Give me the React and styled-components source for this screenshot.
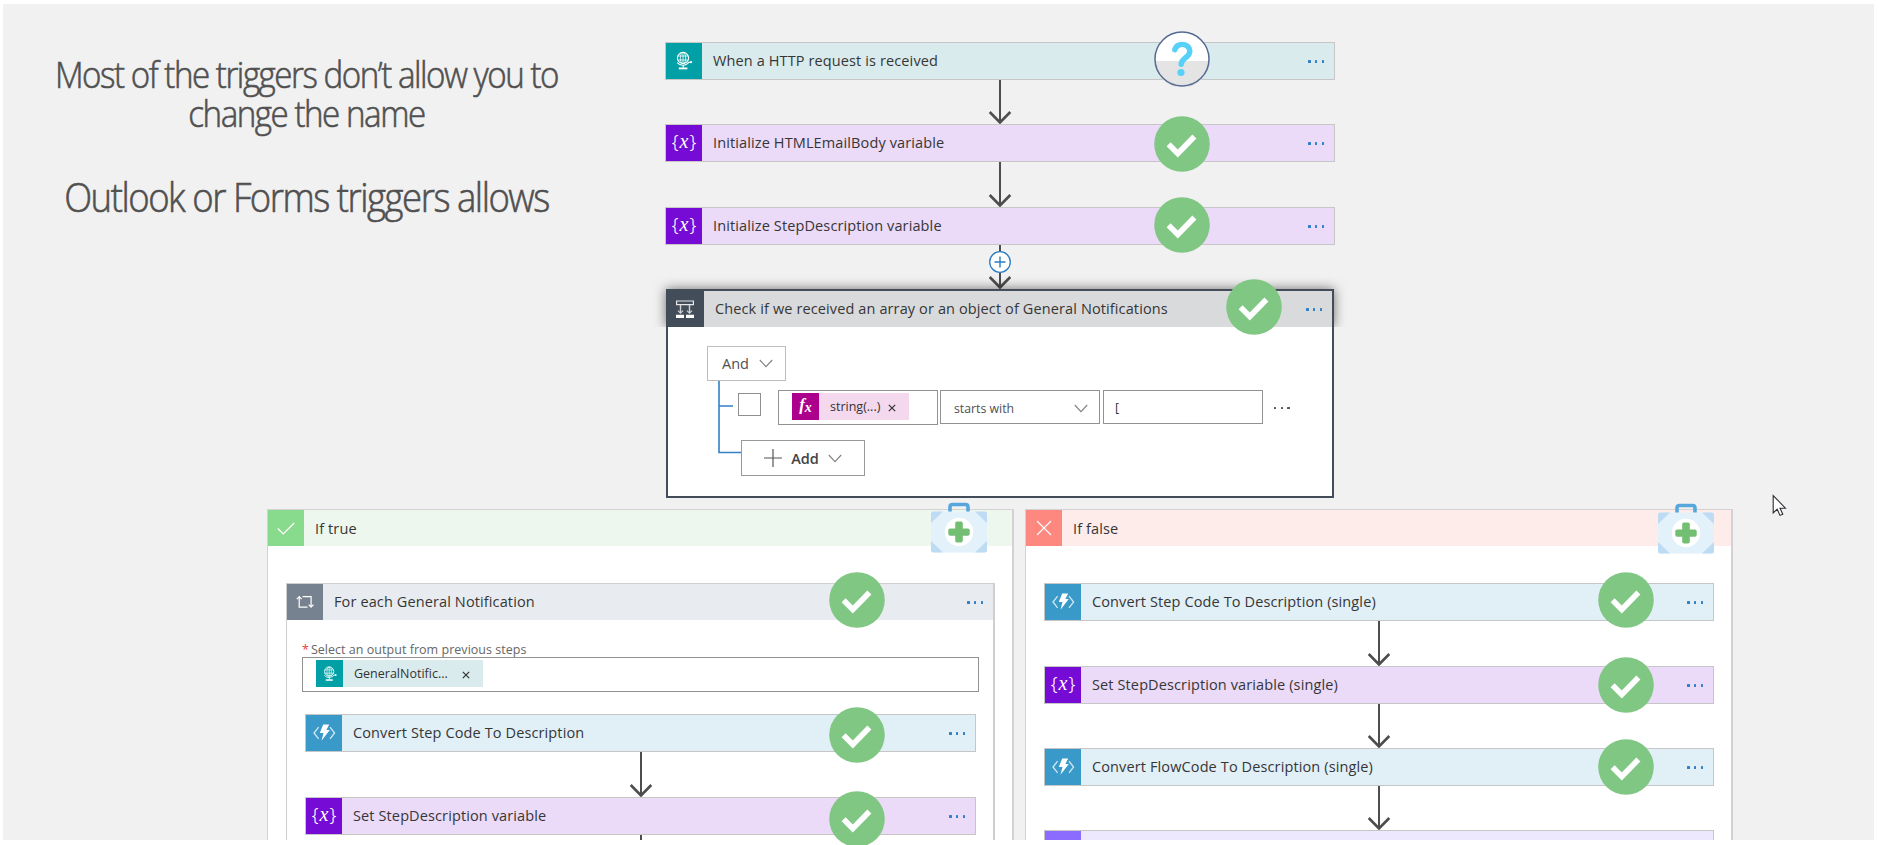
import styled, { createGlobalStyle } from "styled-components";

const GlobalStyle = createGlobalStyle`
  * {
    box-sizing: border-box;
  }
  body {
    margin: 0;
    font-family: "Open Sans", "Noto Sans", sans-serif;
    color: #363636;
  }
`;
const Page = styled.div`
  position: relative;
  width: 1880px;
  height: 845px;
  overflow: hidden;
  background-color: #f1f1f1;
  /* white frame around the canvas, the badges stay above it */
  &::after {
    content: "";
    position: absolute;
    inset: 0;
    border: solid #fff;
    border-width: 4px 6px 5px 3px;
    z-index: 1;
    pointer-events: none;
  }
`;
const TopArea = styled.div`
  display: grid;
  grid-template-columns: 665px 670px 1fr;
  height: 509px;
`;
const Notes = styled.div`
  padding: 55px 52px 0 0;
  text-align: center;
  color: #505050;
  font-weight: 300;
`;
const Note = styled.p`
  margin: 0 0 ${({ $gap }) => $gap || 0}px;
  font-size: ${({ $size }) => $size}px;
  line-height: 39px;
  letter-spacing: -1.6px;
  white-space: nowrap;
  transform: scaleX(0.92);
  -webkit-text-stroke: 0.6px #505050;
`;
const Flow = styled.div`
  display: flex;
  flex-direction: column;
  align-items: stretch;
  padding-top: ${({ $top }) => $top || 0}px;
`;
const Step = styled.div`
  position: relative;
  display: flex;
  align-items: center;
  flex: none;
  height: 38px;
  border: 1px solid #c6c6c6;
  background-color: ${({ $bg }) => $bg};
`;
const Tile = styled.div`
  display: flex;
  align-items: center;
  justify-content: center;
  flex: none;
  align-self: stretch;
  width: ${({ $width }) => $width || 36}px;
  background-color: ${({ $bg }) => $bg};
  color: #fff;
`;
const StepName = styled.span`
  flex: 1;
  padding: 0 0 1px 11px;
  font-size: 14.5px;
  letter-spacing: 0.12px;
  white-space: nowrap;
`;
const BranchName = styled(StepName)`
  padding-bottom: 0;
`;
const Dots = styled.span`
  display: flex;
  flex: none;
  gap: 4.3px;
  margin: 1px ${({ $right }) => $right ?? 10}px 0 ${({ $left }) => $left || 0}px;
  &::before,
  &::after,
  i {
    content: "";
    width: 2.4px;
    height: 2.4px;
    border-radius: 0.5px;
    background-color: ${({ $color }) => $color || "#2f80c8"};
  }
`;
const Badge = styled.div`
  position: absolute;
  z-index: 2;
  left: ${({ $x }) => $x}px;
  top: ${({ $y }) => $y}px;
  svg {
    display: block;
  }
`;
const ArrowBox = styled.div`
  display: flex;
  justify-content: center;
  flex: none;
  height: ${({ $height }) => $height}px;
`;
const ArrowInner = styled.div`
  position: relative;
  width: 24px;
`;
const PlusBadge = styled.div`
  position: absolute;
  left: 0;
  top: 5px;
`;
const Condition = styled.div`
  width: 668px;
  height: 209px;
  margin: 0 1px;
  border: 2px solid #434d59;
  background-color: #fff;
`;
const ConditionHead = styled.div`
  position: relative;
  display: flex;
  align-items: center;
  height: 38px;
  margin: -2px -2px 0;
  border: solid #434d59;
  border-width: 2px 2px 0 0;
  background-color: #d9dadc;
  /* shadow goes round the header only, not over the body */
  &::before {
    content: "";
    position: absolute;
    inset: -2px -2px 0 0;
    box-shadow: 0 0 12px rgba(0, 0, 0, 0.55);
    clip-path: inset(-14px -14px 0 -14px);
  }
`;
const ConditionBody = styled.div`
  padding: 19px 0 0 39px;
`;
const Select = styled.div`
  display: flex;
  align-items: center;
  flex: none;
  width: ${({ $width }) => $width}px;
  height: ${({ $height }) => $height}px;
  padding: ${({ $pad }) => $pad};
  justify-content: space-between;
  border: 1px solid ${({ $border }) => $border || "#999"};
  background-color: #fff;
  font-size: ${({ $size }) => $size || 14.5}px;
  font-weight: ${({ $weight }) => $weight || 400};
  color: ${({ $color }) => $color || "#505050"};
  svg {
    flex: none;
  }
`;
const AddButton = styled(Select)`
  margin-left: 3px;
`;
const Tree = styled.div`
  display: grid;
  grid-template-columns: 11px 1fr;
  height: 95px;
`;
const TreeLines = styled.svg`
  grid-column: 2;
  grid-row: 1;
`;
const TreeItems = styled.div`
  grid-column: 2;
  grid-row: 1;
  padding-left: 20px;
`;
const RuleRow = styled.div`
  display: flex;
  align-items: flex-start;
  padding-top: 9px;
  height: 59px;
`;
const CheckBox = styled.div`
  flex: none;
  width: 23px;
  height: 23px;
  margin: 3px 17px 0 0;
  border: 1px solid #8f8f8f;
`;
const Field = styled.div`
  display: flex;
  align-items: center;
  flex: none;
  width: ${({ $width }) => $width}px;
  height: ${({ $height }) => $height}px;
  padding-left: ${({ $pad }) => $pad}px;
  margin: 0 ${({ $right }) => $right || 0}px 0 ${({ $left }) => $left || 0}px;
  border: 1px solid #929292;
  background-color: #fff;
  font-size: 12.5px;
  color: #333;
`;
const RuleDots = styled.div`
  display: flex;
  align-items: center;
  height: 35px;
`;
const Token = styled.div`
  display: flex;
  align-items: center;
  width: ${({ $width }) => $width}px;
  height: 27px;
  margin-top: -2px;
  background-color: ${({ $bg }) => $bg};
  white-space: nowrap;
  > svg {
    margin-top: 2px;
  }
`;
const TokenText = styled.span`
  width: ${({ $width }) => $width}px;
  padding-left: ${({ $pad }) => $pad}px;
`;
const Branches = styled.div`
  display: flex;
  gap: 11px;
  padding-left: 267px;
`;
const Branch = styled.div`
  flex: none;
  width: ${({ $width }) => $width}px;
  height: 400px;
  border: 1px solid #d2d2d2;
  border-right-width: 2px;
  background-color: #fff;
`;
const BranchHead = styled.div`
  position: relative;
  display: flex;
  align-items: center;
  height: 36px;
  background-color: ${({ $bg }) => $bg};
`;
const BranchBody = styled.div`
  padding: 37px 0 0 18px;
`;
const FalseFlow = styled(Flow)`
  width: 670px;
`;
const Scope = styled.div`
  width: 709px;
  height: 360px;
  border: 1px solid #cfcfcf;
  border-right-width: 2px;
`;
const ScopeBody = styled.div`
  padding: 22px 0 0 15px;
`;
const FieldLabel = styled.div`
  height: 15px;
  line-height: 16px;
  font-size: 12.5px;
  letter-spacing: 0.03px;
  color: #666;
  white-space: nowrap;
  b {
    color: #f04040;
    font-weight: 400;
    margin-right: 2px;
  }
`;
const ScopeFlow = styled(Flow)`
  width: 671px;
  margin-left: 3px;
`;
const VarGlyph = styled.span`
  display: flex;
  align-items: center;
  margin-top: -4px;
  font-family: "Noto Sans", sans-serif;
  font-size: 19px;
  font-weight: 300;
  line-height: 20px;
  i {
    font-family: "Liberation Serif", serif;
    font-size: 20px;
    margin: 0 1px;
  }
`;
const FxGlyph = styled.span`
  font-family: "Liberation Serif", serif;
  font-style: italic;
  font-weight: bold;
  font-size: 17px;
  line-height: 20px;
  sub {
    font-size: 14px;
    vertical-align: -2px;
  }
`;
const Pointer = styled.svg`
  position: absolute;
  left: 1772px;
  top: 494px;
`;

const Globe = ({ size = 22 }) => (
  <svg width={size} height={size} viewBox="0 0 22 22" fill="none" stroke="#fff">
    <circle cx="10" cy="8" r="5.6" strokeWidth="1.1" />
    <path d="M10 2.4v11.2M4.6 6h10.8M4.6 10h10.8" strokeWidth="0.8" />
    <ellipse cx="10" cy="8" rx="2.7" ry="5.6" strokeWidth="0.8" />
    <path d="M4.2 12.6c3 3.6 9 3.4 11.8-.4M10.2 15v3" strokeWidth="1.1" />
    <path d="M5.8 18.4h8.6" strokeWidth="1.8" />
    <path d="M15.5 12.2h2" strokeWidth="1" />
    <circle cx="18" cy="12.2" r="1.1" fill="#fff" stroke="none" />
  </svg>
);
const Bolt = () => (
  <svg width="36" height="36" viewBox="0 0 36 36" fill="none">
    <path d="M12.6 12.2L8 18l4.6 5.8M24 12.2l4.6 5.8-4.6 5.8" stroke="#d3e8f4" strokeWidth="1.3" />
    <path d="M17.2 9.6h6L20.4 15h3.4l-8.3 10.8 2-7.8h-3.7z" fill="#fff" />
  </svg>
);
const Split = () => (
  <svg width="20" height="20" viewBox="0 0 20 20" fill="none">
    <path d="M1.6 2h16.8v3.6H1.6z" stroke="#e6e8ea" strokeWidth="1.2" />
    <path d="M5.5 6v8M14.5 6v8" stroke="#cfd3d8" strokeWidth="1.4" />
    <path d="M3 11.6l2.5 2.6L8 11.6M12 11.6l2.5 2.6 2.5-2.6" stroke="#cfd3d8" strokeWidth="1.2" />
    <path d="M1 15.8h8V19H1zM11 15.8h8V19h-8z" fill="#fff" />
  </svg>
);
const Loop = () => (
  <svg width="20" height="16" viewBox="0 0 20 16" fill="none" stroke="#fff" strokeWidth="1.2">
    <path d="M12.5 13.2H4.2V3M1.8 5.2l2.4-2.6 2.4 2.6" />
    <path d="M7.5 2.6h8.6V13M13.7 10.6l2.4 2.6 2.4-2.6" />
  </svg>
);
const Chevron = () => (
  <svg width="14" height="9" viewBox="0 0 14 9" fill="none" stroke="#808080" strokeWidth="1.1">
    <path d="M.8 1L7 7.6 13.2 1" />
  </svg>
);
const Close = () => (
  <svg width="8" height="8" viewBox="0 0 8 8" stroke="#333" strokeWidth="1.2">
    <path d="M.8.8l6.4 6.4M7.2.8L.8 7.2" />
  </svg>
);
const DoneMark = () => (
  <svg width="56" height="56" viewBox="0 0 56 56">
    <circle cx="28" cy="28" r="27.8" fill="#81c784" />
    <path d="M14.6 28.3l9.2 9.2 16.6-17" fill="none" stroke="#fff" strokeWidth="5.6" />
  </svg>
);
const QuestionMark = () => (
  <svg width="56" height="56" viewBox="0 0 56 56">
    <circle cx="28" cy="28" r="27" fill="#fff" />
    <path d="M1 30a27 27 0 0 0 54 0z" fill="#e4e4e4" />
    <circle cx="28" cy="28" r="27" fill="none" stroke="#566a92" strokeWidth="1.5" />
    <path
      d="M20.8 18.8c1.2-4.6 6.4-6.4 10.6-4.800 5 2 5.600 7.600 2.200 11-3 3-6.400 4-6.400 8.200"
      fill="none"
      stroke="#57d1f8"
      strokeWidth="5.4"
      strokeLinecap="round"
    />
    <circle cx="27" cy="41.5" r="3.6" fill="#57d1f8" />
  </svg>
);
const MedKit = () => (
  <svg width="56" height="51" viewBox="0 0 56 51">
    <path d="M19 10V5q0-2.5 2.5-2.5h13Q37 2.500 37 5v5" fill="none" stroke="#57a7dc" strokeWidth="3.6" />
    <rect y="9.5" width="56" height="41" rx="2.5" fill="#e3f1fb" />
    <path
      d="M0 21V12q0-2.500 2.500-2.500H12zM56 21V12q0-2.500-2.500-2.500H44zM0 39v9q0 2.500 2.500 2.500H12zM56 39v9q0 2.500-2.500 2.500H44z"
      fill="#bddcf3"
    />
    <circle cx="28" cy="30" r="14.2" fill="#fff" />
    <rect x="24.2" y="19.5" width="7.6" height="21" rx="1.8" fill="#72bf74" />
    <rect x="17.3" y="26.4" width="21.4" height="7.4" rx="1.8" fill="#72bf74" />
  </svg>
);
const Variable = () => (
  <VarGlyph>
    {"{"}
    <i>x</i>
    {"}"}
  </VarGlyph>
);

function Arrow({ height = 44, plus }) {
  return (
    <ArrowBox $height={height}>
      <ArrowInner>
        <svg width="24" height={height} viewBox={`0 0 24 ${height}`} fill="none" stroke="#4d4d4d">
          <path d={`M12 0v${height - 2}`} strokeWidth="2" />
          <path d={`M1.7 ${height - 12}l10.3 10.5 10.3-10.5`} strokeWidth="2.6" />
        </svg>
        {plus && (
          <PlusBadge>
            <svg width="24" height="24" viewBox="0 0 24 24" stroke="#2b7cc4">
              <circle cx="12" cy="12" r="10.3" fill="#fff" strokeWidth="1.3" />
              <path d="M12 6.5v11M6.5 12h11" strokeWidth="1.4" />
            </svg>
          </PlusBadge>
        )}
      </ArrowInner>
    </ArrowBox>
  );
}

const kinds = {
  http: { bg: "#daebed", tile: "#00a0a6", icon: <Globe /> },
  variable: { bg: "#ebdaf8", tile: "#770bd6", icon: <Variable /> },
  code: { bg: "#e1eff7", tile: "#3999c8", icon: <Bolt /> },
  data: { bg: "#ede8fd", tile: "#8c6cff", icon: null },
};

function Action({ kind, name, badgeX, badgeY, question }) {
  const { bg, tile, icon } = kinds[kind];
  return (
    <Step $bg={bg}>
      <Tile $bg={tile}>{icon}</Tile>
      {name && (
        <>
          <StepName>{name}</StepName>
          <Dots>
            <i />
          </Dots>
          <Badge $x={badgeX} $y={badgeY}>
            {question ? <QuestionMark /> : <DoneMark />}
          </Badge>
        </>
      )}
    </Step>
  );
}

function ConditionCard() {
  return (
    <Condition>
      <ConditionHead>
        <Tile $bg="#434d59" $width={38}>
          <Split />
        </Tile>
        <StepName>Check if we received an array or an object of General Notifications</StepName>
        <Dots>
          <i />
        </Dots>
        <Badge $x={560} $y={-12}>
          <DoneMark />
        </Badge>
      </ConditionHead>
      <ConditionBody>
        <Select $width={79} $height={35} $border="#bdbdbd" $pad="0 12px 1px 14px">
          And
          <Chevron />
        </Select>
        <Tree>
          <TreeLines width="40" height="95">
            <path d="M1 0v71.5h22M1 25h14" fill="none" stroke="#3580c6" strokeWidth="1.6" />
          </TreeLines>
          <TreeItems>
            <RuleRow>
              <CheckBox />
              <Field $width={160} $height={35} $pad={13} $right={2}>
                <Token $bg="#f4d9ee" $width={117}>
                  <Tile $bg="#ac008c" $width={27}>
                    <FxGlyph>
                      f<sub>x</sub>
                    </FxGlyph>
                  </Tile>
                  <TokenText $pad={11} $width={69}>
                    string(...)
                  </TokenText>
                  <Close />
                </Token>
              </Field>
              <Select $width={160} $height={34} $size={12.3} $border="#929292" $pad="2px 11px 0 13px">
                starts with
                <Chevron />
              </Select>
              <Field $width={160} $height={34} $pad={11} $left={3}>
                [
              </Field>
              <RuleDots>
                <Dots $left={11} $color="#555">
                  <i />
                </Dots>
              </RuleDots>
            </RuleRow>
            <AddButton $width={124} $height={36} $weight={600} $color="#444" $pad="0 22px">
              <svg width="18" height="18" viewBox="0 0 18 18" stroke="#555" strokeWidth="1.2">
                <path d="M9 0v18M0 9h18" />
              </svg>
              Add
              <Chevron />
            </AddButton>
          </TreeItems>
        </Tree>
      </ConditionBody>
    </Condition>
  );
}

export default function App() {
  return (
    <Page>
      <GlobalStyle />
      <TopArea>
        <Notes>
          <Note $size={36} $gap={45}>
            Most of the triggers don’t allow you to
            <br />
            change the name
          </Note>
          <Note $size={39.7}>Outlook or Forms triggers allows</Note>
        </Notes>
        <Flow $top={42}>
          <Action kind="http" name="When a HTTP request is received" badgeX={487.5} badgeY={-12} question />
          <Arrow />
          <Action kind="variable" name="Initialize HTMLEmailBody variable" badgeX={487.5} badgeY={-9} />
          <Arrow height={45} />
          <Action kind="variable" name="Initialize StepDescription variable" badgeX={487.5} badgeY={-11} />
          <Arrow plus />
          <ConditionCard />
        </Flow>
      </TopArea>
      <Branches>
        <Branch $width={747}>
          <BranchHead $bg="#edf7ee">
            <Tile $bg="#88da8c">
              <svg width="18" height="13" viewBox="0 0 18 13" fill="none" stroke="#fff" strokeWidth="1.3">
                <path d="M.8 6.5l5.4 5.4L17.2 1" />
              </svg>
            </Tile>
            <BranchName>If true</BranchName>
            <Badge $x={663} $y={-8.5}>
              <MedKit />
            </Badge>
          </BranchHead>
          <BranchBody>
            <Scope>
              <BranchHead $bg="#e8ecf0">
                <Tile $bg="#76828f">
                  <Loop />
                </Tile>
                <StepName>For each General Notification</StepName>
                <Dots>
                  <i />
                </Dots>
                <Badge $x={542} $y={-12}>
                  <DoneMark />
                </Badge>
              </BranchHead>
              <ScopeBody>
                <FieldLabel>
                  <b>*</b>Select an output from previous steps
                </FieldLabel>
                <Field $width={677} $height={35} $pad={13}>
                  <Token $bg="#daebed" $width={167}>
                    <Tile $bg="#00a0a6" $width={27}>
                      <Globe size={18} />
                    </Tile>
                    <TokenText $pad={11} $width={119}>
                      GeneralNotific...
                    </TokenText>
                    <Close />
                  </Token>
                </Field>
                <ScopeFlow $top={22}>
                  <Action kind="code" name="Convert Step Code To Description" badgeX={523} badgeY={-8.5} />
                  <Arrow height={45} />
                  <Action kind="variable" name="Set StepDescription variable" badgeX={523} badgeY={-7} />
                  <Arrow />
                </ScopeFlow>
              </ScopeBody>
            </Scope>
          </BranchBody>
        </Branch>
        <Branch $width={708}>
          <BranchHead $bg="#feeceb">
            <Tile $bg="#fc8880">
              <svg width="16" height="16" viewBox="0 0 16 16" stroke="#fff" strokeWidth="1.1">
                <path d="M1 1l14 14M15 1L1 15" />
              </svg>
            </Tile>
            <BranchName>If false</BranchName>
            <Badge $x={631.5} $y={-7}>
              <MedKit />
            </Badge>
          </BranchHead>
          <BranchBody>
            <FalseFlow>
              <Action kind="code" name="Convert Step Code To Description (single)" badgeX={553} badgeY={-12} />
              <Arrow height={45} />
              <Action kind="variable" name="Set StepDescription variable (single)" badgeX={553} badgeY={-10} />
              <Arrow />
              <Action kind="code" name="Convert FlowCode To Description (single)" badgeX={553} badgeY={-10} />
              <Arrow />
              <Action kind="data" />
            </FalseFlow>
          </BranchBody>
        </Branch>
      </Branches>
      <Pointer width="16" height="24" viewBox="0 0 16 24">
        <path
          d="M1.2 1.5V19l4-3.800 2.800 6.200 2.800-1.200-2.800-6h5.400z"
          fill="#fff"
          stroke="#2b2b33"
          strokeWidth="1.1"
        />
      </Pointer>
    </Page>
  );
}
